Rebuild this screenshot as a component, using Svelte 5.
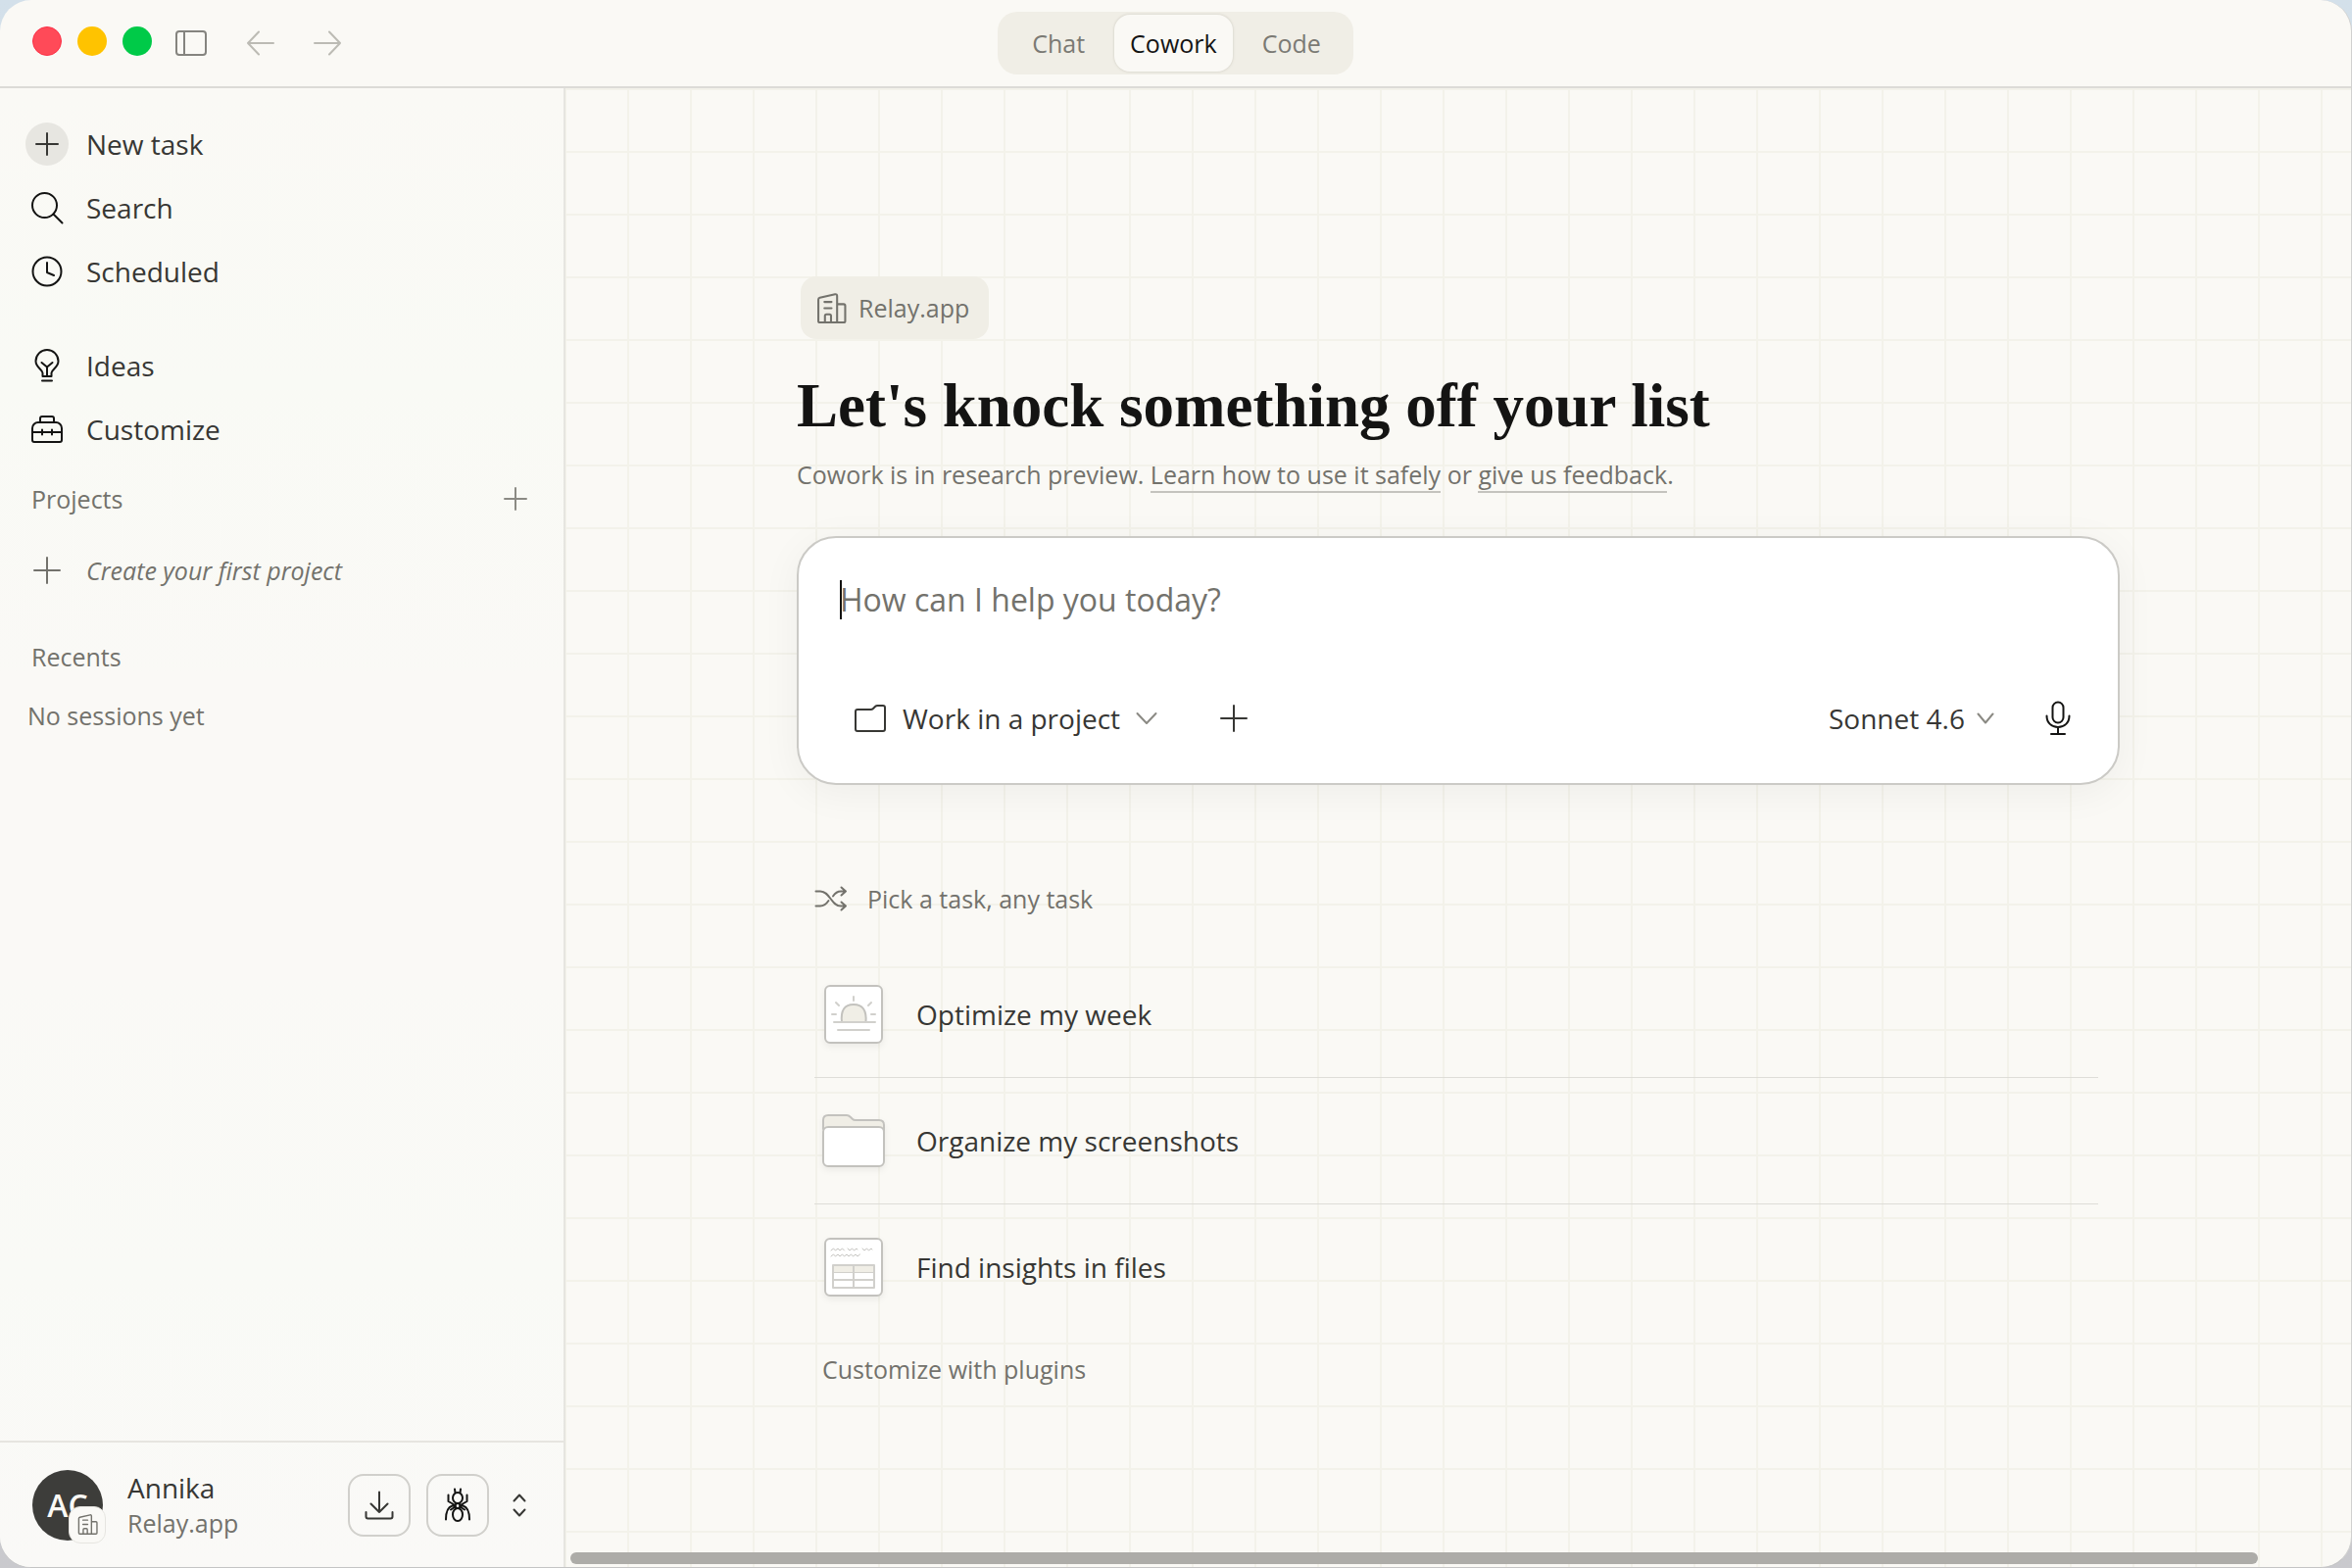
<script lang="ts">
	const tabs = ['Chat', 'Cowork', 'Code'];
	let activeTab = $state('Cowork');
	let prompt = $state('');
	let model = $state('Sonnet 4.6');
</script>

{#snippet building(size: number)}
	<svg class="icon" width={size} height={size} viewBox="0 0 30 30" stroke-width="2">
		<path
			d="M20.5 29H3.5A1.5 1.5 0 0 1 2 27.5V6.6Q2 5 3.5 4.6L18.5 1.2Q20.5.8 20.5 2.8ZM20.5 11H27Q28.5 11 28.5 12.5V27.5Q28.5 29 27 29H20.5"
		/>
		<path d="M8 8.8h7M8 15h7M8.5 29v-6.4Q8.5 21 10 21h3q1.5 0 1.5 1.6V29" />
	</svg>
{/snippet}

{#snippet plus(size: number)}
	<svg class="icon" width={size} height={size} viewBox="0 0 {size} {size}" stroke-width="2">
		<path d="M{size / 2} 1V{size - 1}M1 {size / 2}H{size - 1}" />
	</svg>
{/snippet}

<div class="window">
	<header class="titlebar">
		<div class="controls">
			<div class="lights">
				<button class="light close" aria-label="Close"></button>
				<button class="light minimize" aria-label="Minimize"></button>
				<button class="light zoom" aria-label="Zoom"></button>
			</div>
			<button class="bare" aria-label="Toggle sidebar">
				<svg class="icon" width="34" height="28" viewBox="0 0 34 28" stroke-width="2">
					<rect x="2" y="2" width="30" height="24" rx="3" />
					<path d="M10 2v24" />
				</svg>
			</button>
			<nav class="history" aria-label="History">
				<button class="bare" aria-label="Back">
					<svg class="icon" width="28" height="26" viewBox="0 0 28 26" stroke-width="2">
						<path d="M27 13H1M12 1.5 1 13l11 11.5" />
					</svg>
				</button>
				<button class="bare" aria-label="Forward">
					<svg class="icon" width="28" height="26" viewBox="0 0 28 26" stroke-width="2">
						<path d="M1 13h26M16 1.5 27 13 16 24.5" />
					</svg>
				</button>
			</nav>
		</div>
		<div class="tabs">
			{#each tabs as tab}
				<button class="tab" class:active={tab === activeTab} onclick={() => (activeTab = tab)}>
					{tab}
				</button>
			{/each}
		</div>
	</header>

	<aside class="sidebar">
		<nav class="menu">
			<button class="item">
				<span class="slot badge">{@render plus(24)}</span>
				New task
			</button>
			<button class="item">
				<span class="slot">
					<svg class="icon" width="34" height="34" viewBox="0 0 34 34" stroke-width="2">
						<circle cx="14.5" cy="14.5" r="12.5" />
						<path d="m23.5 23.5 9 9" />
					</svg>
				</span>
				Search
			</button>
			<button class="item">
				<span class="slot">
					<svg class="icon" width="32" height="32" viewBox="0 0 32 32" stroke-width="2">
						<circle cx="16" cy="16" r="14.5" />
						<path d="M16 7v10l7 3" />
					</svg>
				</span>
				Scheduled
			</button>
		</nav>
		<nav class="menu">
			<button class="item">
				<span class="slot">
					<svg class="icon" width="26" height="34" viewBox="0 0 26 34" stroke-width="2">
						<path
							d="M8.5 28h9V24.5C17.5 21 24.5 19 24.5 12.5A11.5 11.5 0 0 0 1.5 12.5C1.5 19 8.5 21 8.5 24.500ZM13 28V18.500M7.500 14 13 18.500 18.500 14M8 32.500h10"
						/>
					</svg>
				</span>
				Ideas
			</button>
			<button class="item">
				<span class="slot">
					<svg class="icon" width="34" height="30" viewBox="0 0 34 30" stroke-width="2">
						<path
							d="M8 8h18a6 6 0 0 1 6 6v12a2 2 0 0 1-2 2H4a2 2 0 0 1-2-2V14a6 6 0 0 1 6-6ZM10 8V4a2 2 0 0 1 2-2h10a2 2 0 0 1 2 2v4M2 18h30M12 15.500v5M22 15.500v5"
						/>
					</svg>
				</span>
				Customize
			</button>
		</nav>

		<div class="section">
			<h2>Projects</h2>
			<button class="bare" aria-label="Add project">{@render plus(24)}</button>
		</div>
		<button class="item create">
			<span class="slot">{@render plus(28)}</span>
			Create your first project
		</button>

		<div class="section recents">
			<h2>Recents</h2>
		</div>
		<p class="empty">No sessions yet</p>

		<footer class="account">
			<div class="avatar">
				AC
				<span class="org">{@render building(21)}</span>
			</div>
			<div class="who">
				<span class="name">Annika</span>
				<span class="team">Relay.app</span>
			</div>
			<button class="square" aria-label="Downloads">
				<svg class="icon" width="30" height="30" viewBox="0 0 30 30" stroke-width="2">
					<path d="M15 1.500V22M6.500 13.500 15 22l8.500-8.500M1.500 22v4.500q0 2 2 2h23q2 0 2-2V22" />
				</svg>
			</button>
			<button class="square bug" aria-label="Report a bug">
				<svg class="icon" width="28" height="36" viewBox="0 0 28 36" stroke-width="2">
					<ellipse cx="14" cy="10.500" rx="5" ry="5.500" />
					<circle cx="14" cy="18.500" r="2.500" />
					<ellipse cx="14" cy="27.500" rx="5" ry="6.500" />
					<path
						d="M11.500 5 11 1.500M16.500 5l.5-3.500M11.500 18 4.500 14V7.500M16.500 18l7-4V7.500M11.500 18.500H8.500Q2 20.500 2 32.500M16.500 18.500h3Q26 20.500 26 32.500M11.500 19.500 7 22.500M16.500 19.500l4.500 3"
					/>
				</svg>
			</button>
			<button class="bare" aria-label="Switch account">
				<svg class="icon" width="14" height="24" viewBox="0 0 14 24" stroke-width="2">
					<path d="m1.500 7.500 5.500-6 5.500 6M1.500 16.500l5.500 6 5.500-6" />
				</svg>
			</button>
		</footer>
	</aside>

	<main>
		<div class="content">
			<button class="chip">
				{@render building(31)}
				Relay.app
			</button>
			<h1>Let's knock something off your list</h1>
			<p class="note">
				Cowork is in research preview. <a href="#safety">Learn how to use it safely</a> or
				<a href="#feedback">give us feedback</a>.
			</p>

			<form class="composer" onsubmit={(e) => e.preventDefault()}>
				<div class="field">
					<span class="caret"></span>
					<textarea
						rows="1"
						aria-label="Message"
						placeholder="How can I help you today?"
						bind:value={prompt}
					></textarea>
				</div>
				<div class="toolbar">
					<button type="button" class="project">
						<svg class="icon" width="34" height="30" viewBox="0 0 34 30" stroke-width="2">
							<path
								d="M4 6h13.500q1.500 0 2.500-1l2-2q1-1 2.500-1H30q2 0 2 2v22q0 2-2 2H4q-2 0-2-2V8q0-2 2-2Z"
							/>
						</svg>
						Work in a project
						<svg class="icon thin" width="22" height="14" viewBox="0 0 22 14" stroke-width="2">
							<path d="m1.500 2 9.500 10L20.500 2" />
						</svg>
					</button>
					<button type="button" class="bare" aria-label="Add files">{@render plus(28)}</button>
					<label class="model">
						<select aria-label="Model" bind:value={model}>
							<option>Sonnet 4.6</option>
						</select>
						<svg class="icon thin" width="18" height="12" viewBox="0 0 18 12" stroke-width="2">
							<path d="m1.500 1.500 7.500 9 7.500-9" />
						</svg>
					</label>
					<button type="button" class="bare mic" aria-label="Dictate">
						<svg class="icon" width="26" height="36" viewBox="0 0 26 36" stroke-width="2">
							<rect x="7.500" y="1.500" width="11" height="21" rx="5.500" />
							<path d="M1.500 15.500c0 7 5 11.500 11.500 11.500s11.500-4.500 11.500-11.500M13 27v7M6 34h14" />
						</svg>
					</button>
				</div>
			</form>

			<section class="tasks">
				<h2>
					<svg class="icon" width="34" height="26" viewBox="0 0 34 26" stroke-width="2">
						<path
							d="M1.500 5.500H6c10 0 11 15 21 15h5M1.500 20.500H6c4 0 6.500-2.500 8.500-5.500M19 10.500c2-3 4-5 8-5h5M27.500 1.500l4.500 4-4.500 4M27.500 16.500l4.500 4-4.500 4"
						/>
					</svg>
					Pick a task, any task
				</h2>
				<ul>
					<li>
						<button class="task">
							<svg class="art" width="64" height="64" viewBox="0 0 64 64">
								<rect x="3" y="3" width="58" height="58" rx="5" />
								<path class="tint" d="M20 40q-2-18 12-18t12.500 18Z" />
								<path
									class="faint"
									d="M12 40h42M16 48h32M32 14v4M14 20l3 3M50 20l-3 3M10 32h4M50 32h4"
								/>
							</svg>
							Optimize my week
						</button>
					</li>
					<li>
						<button class="task">
							<svg class="art" width="64" height="64" viewBox="0 0 64 64">
								<path
									class="tint"
									d="M1 20V11q0-5 5-5h19q2 0 4 2l2 2q1 1 3 1h24q5 0 5 5v6Z"
								/>
								<rect x="1" y="18" width="62" height="40" rx="5" />
							</svg>
							Organize my screenshots
						</button>
					</li>
					<li>
						<button class="task">
							<svg class="art" width="64" height="64" viewBox="0 0 64 64">
								<rect x="3" y="3" width="58" height="58" rx="5" />
								<path class="tint faint" d="M11 30h42v8H11Z" />
								<path class="faint" d="M11 38v15h42V38M11 45h42M32 30v23" />
								<path
									class="scribble"
									d="m9 15 2.500-2 2 2 2.500-2 2 2 2.500-2 2 2M26 13l2 2 2.500-2 2 2 2.500-2 1 1M41 13l2 2 2.500-2 2 2 2.500-2 1 1M9 21l2.500-2 2 2 2.500-2 2 2 2.500-2 2 2 2.500-2 2 2 2.500-2 2 2 2.500-2 2 2 2.500-2"
								/>
							</svg>
							Find insights in files
						</button>
					</li>
				</ul>
				<a class="plugins" href="#plugins">Customize with plugins</a>
			</section>
		</div>
		<div class="scrollbar"></div>
	</main>
</div>

<style>
	:global(body) {
		background: linear-gradient(#d3e0ea, #c9c9cd);
	}

	.window {
		--line: #dcdbd7;
		--text: #373734;
		--muted: #73726c;
		--ink: #141413;
		box-sizing: border-box;
		min-height: 100vh;
		display: grid;
		grid-template: 90px 1fr / 577px 1fr;
		overflow: hidden;
		border-right: 1px solid #d0d0cf;
		border-bottom: 1px solid #c4c4c4;
		border-radius: 32px;
		background: #faf9f5;
		color: var(--text);
		font-family: 'Open Sans', 'Noto Sans', sans-serif;
		font-size: 28px;
		line-height: 36px;
	}

	.window *,
	.window *::before {
		box-sizing: border-box;
	}

	button,
	select,
	textarea {
		margin: 0;
		padding: 0;
		border: none;
		background: none;
		color: inherit;
		font: inherit;
	}

	button {
		cursor: pointer;
	}

	h1,
	h2,
	p,
	ul {
		margin: 0;
		padding: 0;
		font-weight: 400;
	}

	.icon {
		display: block;
		flex-shrink: 0;
		fill: none;
		stroke: currentColor;
		stroke-linecap: round;
		stroke-linejoin: round;
	}

	.bare {
		display: flex;
		align-items: center;
		justify-content: center;
	}

	/* title bar */
	.titlebar {
		grid-column: 1 / -1;
		display: grid;
		grid-template-columns: 1fr auto 1fr;
		align-items: center;
		border-bottom: 2px solid var(--line);
	}

	.controls {
		display: flex;
		align-items: center;
		gap: 23px;
		padding-left: 33px;
		color: #85847f;
	}

	.lights {
		display: flex;
		gap: 16px;
		padding-bottom: 4px;
	}

	.light {
		width: 30px;
		height: 30px;
		border-radius: 50%;
	}

	.close {
		background: #ff4a58;
		border: 1px solid #fb3147;
	}

	.minimize {
		background: #ffc300;
	}

	.zoom {
		background: #00ca48;
	}

	.history {
		display: flex;
		gap: 40px;
		padding-left: 17px;
		color: #bcbbb4;
	}

	.tabs {
		display: flex;
		padding: 3px;
		border-radius: 20px;
		background: #f0eee6;
	}

	.tab {
		height: 58px;
		padding: 0 16px;
		border-radius: 16px;
		color: #7b7a74;
		font-size: 25px;
	}

	.tab:first-child {
		padding: 0 30px 0 32px;
	}

	.tab:last-child {
		padding: 0 30px;
	}

	.tab.active {
		background: #faf9f5;
		color: var(--ink);
		box-shadow: 0 0 2px 1px #dedcd3;
	}

	/* sidebar */
	.sidebar {
		display: flex;
		flex-direction: column;
		padding-top: 24px;
		border-right: 2px solid #e6e5e0;
		background: linear-gradient(#faf9f5, #f9faf5 20%, #faf9f6 40%, #faf9f6 60%, #f9faf6 80%, #faf9f7);
	}

	.menu {
		display: flex;
		flex-direction: column;
		margin-bottom: 31px;
	}

	.menu + .menu {
		margin-bottom: 15px;
	}

	.item {
		display: flex;
		align-items: center;
		gap: 18px;
		height: 65px;
		padding-left: 26px;
		text-align: left;
	}

	.slot {
		display: flex;
		align-items: center;
		justify-content: center;
		width: 44px;
		height: 44px;
		color: var(--ink);
	}

	.badge {
		border-radius: 50%;
		background: #e7e6e1;
		color: var(--text);
	}

	.section {
		display: flex;
		align-items: center;
		justify-content: space-between;
		height: 48px;
		padding: 0 37px 0 32px;
		color: #8b8a84;
	}

	.section h2 {
		color: var(--muted);
		font-size: 25px;
	}

	.create {
		margin-top: 16px;
		color: var(--muted);
		font-size: 25px;
		font-style: italic;
	}

	.create .slot {
		color: var(--muted);
	}

	.recents {
		margin-top: 32px;
	}

	.empty {
		margin-top: 18px;
		padding-left: 28px;
		color: var(--muted);
		font-size: 25px;
	}

	.account {
		display: flex;
		align-items: center;
		gap: 16px;
		height: 129px;
		margin-top: auto;
		padding: 0 38px 0 33px;
		border-top: 2px solid #e6e5e0;
	}

	.avatar {
		position: relative;
		width: 72px;
		height: 72px;
		border-radius: 50%;
		background: #3d3d3a;
		color: #faf9f5;
		font-size: 32px;
		font-weight: 600;
		line-height: 72px;
		text-align: center;
	}

	.org {
		position: absolute;
		right: -3px;
		bottom: -3px;
		display: flex;
		align-items: center;
		justify-content: center;
		width: 38px;
		height: 38px;
		border: 1px solid #e6e5e0;
		border-radius: 12px;
		background: #faf9f6;
		color: var(--muted);
	}

	.who {
		display: flex;
		flex: 1;
		flex-direction: column;
		padding-left: 9px;
	}

	.team {
		color: var(--muted);
		font-size: 25px;
	}

	.square {
		display: flex;
		align-items: center;
		justify-content: center;
		width: 64px;
		height: 64px;
		border: 2px solid #d1d0cc;
		border-radius: 16px;
	}

	.bug {
		color: var(--ink);
	}

	.account .bare {
		margin-left: 8px;
	}

	/* main pane */
	main {
		display: flex;
		flex-direction: column;
		background-image:
			linear-gradient(90deg, #f3f2ea 2px, transparent 2px),
			linear-gradient(#f3f2ea 2px, transparent 2px);
		background-position:
			-1px 0,
			0 0;
		background-size: 64px 64px;
	}

	.content {
		display: flex;
		flex: 1;
		flex-direction: column;
		align-items: flex-start;
		width: 100%;
		max-width: 1350px;
		margin: 0 auto;
		padding-top: 192px;
	}

	.chip {
		display: flex;
		align-items: center;
		gap: 12px;
		height: 64px;
		margin-left: 4px;
		padding: 0 20px 0 16px;
		border-radius: 16px;
		background: #f0eee6;
		color: var(--muted);
		font-size: 25px;
	}

	h1 {
		margin-top: 32px;
		color: var(--ink);
		font-family: 'Liberation Serif', serif;
		font-size: 63px;
		font-weight: 700;
		line-height: 72px;
	}

	.note {
		margin-top: 16px;
		color: var(--muted);
		font-size: 25px;
	}

	.note a {
		border-bottom: 2px solid #c4c3be;
		color: inherit;
		text-decoration: none;
	}

	.composer {
		display: flex;
		flex-direction: column;
		justify-content: space-between;
		width: 100%;
		height: 254px;
		margin-top: 45px;
		padding: 41px 48px 34px 42px;
		border: 2px solid #cbcac6;
		border-radius: 40px;
		background: #fff;
		box-shadow: 0 8px 40px rgb(0 0 0 / 5%);
	}

	.field {
		position: relative;
	}

	.caret {
		position: absolute;
		top: 2px;
		left: 0;
		width: 2px;
		height: 40px;
		background: var(--ink);
	}

	textarea {
		display: block;
		width: 100%;
		height: 44px;
		overflow: hidden;
		outline: none;
		resize: none;
		font-size: 32px;
		line-height: 44px;
	}

	textarea::placeholder {
		color: var(--muted);
		opacity: 1;
	}

	.toolbar {
		display: flex;
		align-items: center;
		height: 64px;
	}

	.project {
		display: flex;
		align-items: center;
		gap: 16px;
		margin-right: 64px;
		padding-left: 14px;
	}

	.thin {
		color: #8b8a84;
	}

	.model {
		display: flex;
		align-items: center;
		gap: 12px;
		margin-left: auto;
	}

	select {
		appearance: none;
	}

	.mic {
		margin-left: 52px;
		color: var(--ink);
	}

	/* suggested tasks */
	.tasks {
		align-self: stretch;
		margin-top: 96px;
		padding: 0 22px 0 18px;
	}

	.tasks h2 {
		display: flex;
		align-items: center;
		gap: 20px;
		margin-bottom: 54px;
		color: var(--muted);
		font-size: 25px;
		line-height: 40px;
	}

	ul {
		margin-top: -20px;
		list-style: none;
	}

	li + li {
		border-top: 1px solid #deddd8;
	}

	.task {
		display: flex;
		align-items: center;
		gap: 32px;
		width: 100%;
		height: 128px;
		padding-left: 8px;
		text-align: left;
	}

	.art {
		flex-shrink: 0;
		overflow: visible;
		fill: #fff;
		stroke: #c3c2be;
		stroke-width: 2;
		stroke-linecap: round;
		stroke-linejoin: round;
		filter: drop-shadow(0 3px 3px rgb(0 0 0 / 6%));
	}

	.tint {
		fill: #f0eee6;
	}

	.faint {
		stroke: #d1d0cc;
	}

	.scribble {
		fill: none;
		stroke-width: 1;
	}

	.plugins {
		display: inline-block;
		margin-top: 22px;
		padding-left: 8px;
		color: var(--muted);
		font-size: 25px;
		text-decoration: none;
	}

	.scrollbar {
		width: calc(100% - 100px);
		height: 12px;
		margin: 0 0 3px 5px;
		border-radius: 6px;
		background: #adaca8;
	}
</style>
